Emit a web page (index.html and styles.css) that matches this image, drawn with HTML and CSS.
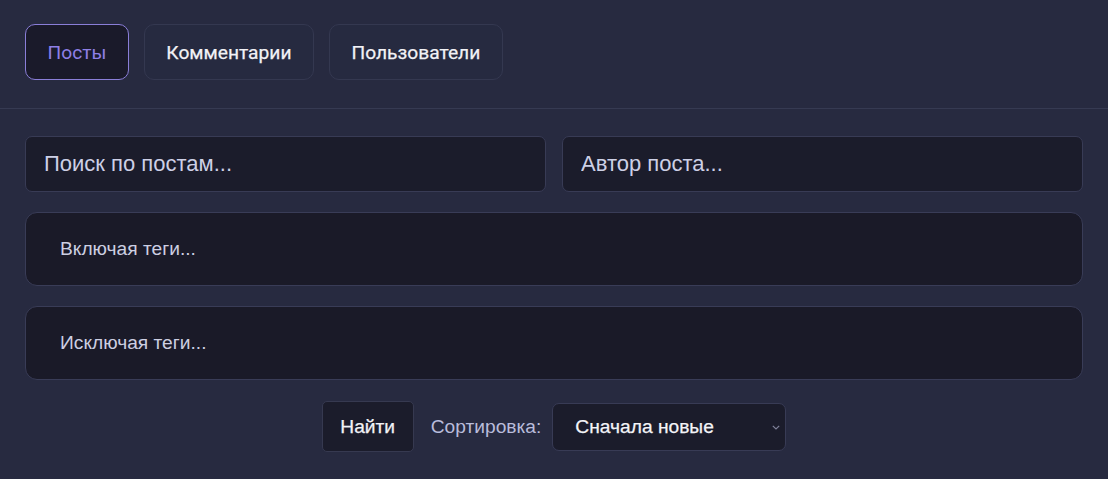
FILE: index.html
```html
<!DOCTYPE html>
<html lang="ru">
<head>
<meta charset="utf-8">
<link rel="stylesheet" href="styles.css">
</head>
<body>
<nav class="tabs">
  <button class="tab active">Посты</button>
  <button class="tab">Комментарии</button>
  <button class="tab">Пользователи</button>
</nav>
<main class="filters">
  <div class="row">
    <input class="field" type="text" placeholder="Поиск по постам...">
    <input class="field" type="text" placeholder="Автор поста...">
  </div>
  <div class="tagbox">Включая теги...</div>
  <div class="tagbox">Исключая теги...</div>
  <div class="actions">
    <button class="find">Найти</button>
    <label class="sort-label">Сортировка:</label>
    <div class="select">
      <span>Сначала новые</span>
      <svg class="chev" width="8" height="5" viewBox="0 0 8 5"><path d="M0.8 0.8 L4 4 L7.2 0.8" fill="none" stroke="#7f8199" stroke-width="1.2"/></svg>
    </div>
  </div>
</main>
</body>
</html>
```
FILE: styles.css
```css
* { box-sizing: border-box; }
html, body { margin: 0; padding: 0; }
body {
  background: #272a40;
  width: 1108px;
  height: 479px;
  overflow: hidden;
  font-family: "Liberation Sans", Arial, sans-serif;
}
.tabs {
  display: flex;
  gap: 15px;
  padding: 24px 25px 28px;
  border-bottom: 1px solid #363a52;
}
.tab {
  height: 56px;
  padding: 0 21.5px;
  border-radius: 10px;
  border: 1px solid #343850;
  background: #262a40;
  color: #f2f2f6;
  font-family: Roboto, "Liberation Sans", sans-serif;
  font-weight: 400;
  font-size: 19.2px;
  -webkit-text-stroke: 0.25px #f2f2f6;
}
.tab.active {
  background: #1a1a2a;
  border-color: #8a7ed8;
  color: #8f80e6;
  -webkit-text-stroke: 0;
}
.filters {
  padding: 27px 25px 0;
  display: flex;
  flex-direction: column;
}
.row {
  display: flex;
  gap: 16px;
}
.field {
  flex: 1;
  height: 56px;
  background: #1b1c2b;
  border: 1px solid #383b55;
  border-radius: 7px;
  padding: 0 18px;
  font-family: "Liberation Sans", Arial, sans-serif;
  font-size: 22px;
  color: #ccd0e6;
  outline: none;
}
.field::placeholder { color: #cdd0e6; }
.tagbox {
  margin-top: 20px;
  height: 74px;
  background: #1a1a28;
  border: 1px solid #393c57;
  border-radius: 12px;
  padding: 0 34px;
  display: flex;
  align-items: center;
  font-size: 19.2px;
  color: #cdcfe2;
}
.actions {
  margin-top: 21px;
  display: flex;
  align-items: center;
  justify-content: center;
}
.find {
  height: 51px;
  width: 92px;
  background: #1b1c2b;
  border: 1px solid #363950;
  border-radius: 5px;
  color: #f2f2f6;
  font-family: "Liberation Sans", Arial, sans-serif;
  font-weight: 400;
  font-size: 19.2px;
  -webkit-text-stroke: 0.25px #f2f2f6;
}
.sort-label {
  margin-left: 17px;
  margin-right: 11px;
  font-size: 19.2px;
  color: #b9bcdb;
}
.select {
  width: 234px;
  height: 48px;
  background: #1b1c2b;
  border: 1px solid #383b55;
  border-radius: 7px;
  padding: 0 5px 0 22px;
  display: flex;
  align-items: center;
  justify-content: space-between;
  font-size: 19.2px;
  color: #f4f4f8;
  -webkit-text-stroke: 0.25px #f4f4f8;
}
.chev { margin-top: 1px; }
```
